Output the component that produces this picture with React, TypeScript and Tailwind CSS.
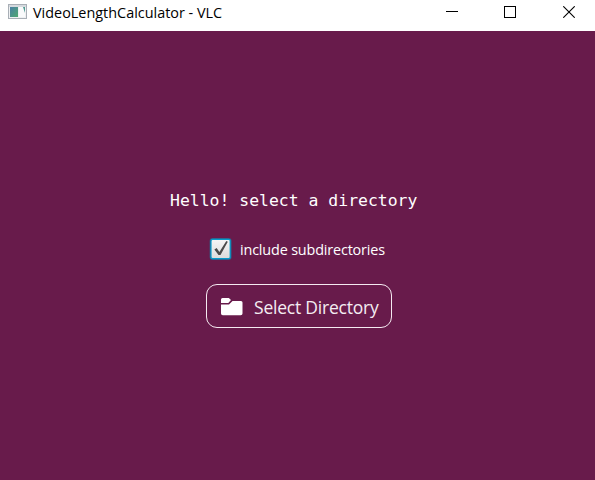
function AppIcon() {
  return (
    <svg width="19" height="15" viewBox="0 0 19 15" className="block shrink-0">
      <defs>
        <linearGradient id="pane" x1="0" y1="0" x2="1" y2="1">
          <stop offset="0" stopColor="#4a7fa5" />
          <stop offset="1" stopColor="#4fa870" />
        </linearGradient>
      </defs>
      <rect x="0.5" y="0.5" width="18" height="14" fill="#eef0f2" stroke="#a9afb6" />
      <rect x="1" y="1" width="17" height="2" fill="#d5d9de" />
      <rect x="2" y="3" width="8" height="10" fill="url(#pane)" />
      <rect x="11" y="3" width="6" height="10" fill="#f9fafb" />
      <path d="M15 3h2v6z" fill="#4f9a91" />
    </svg>
  );
}

function TitleBar() {
  return (
    <header className="flex h-[31px] shrink-0 items-start bg-white pl-2">
      <div className="mt-1">
        <AppIcon />
      </div>
      <h1 className="ml-[6px] mt-px h-6 whitespace-nowrap text-[14.4px] leading-6 tracking-[0.01px] text-black">
        VideoLengthCalculator - VLC
      </h1>
      <div className="ml-auto flex pr-5 pt-[6px]">
        <button aria-label="Minimize" className="block">
          <svg width="12" height="12" viewBox="0 0 12 12" className="block" shapeRendering="crispEdges">
            <path d="M0 5.5h12" stroke="#000" />
          </svg>
        </button>
        <button aria-label="Maximize" className="ml-[46px] block">
          <svg width="12" height="12" viewBox="0 0 12 12" className="block" shapeRendering="crispEdges">
            <rect x="0.5" y="0.5" width="11" height="11" fill="none" stroke="#000" />
          </svg>
        </button>
        <button aria-label="Close" className="ml-[47px] block">
          <svg width="12" height="12" viewBox="0 0 12 12" className="block">
            <path d="M0.3 0.3l11.4 11.4M11.7 0.3L0.3 11.7" stroke="#000" strokeWidth="1.1" />
          </svg>
        </button>
      </div>
    </header>
  );
}

function CheckBox() {
  return (
    <svg width="24" height="24" viewBox="0 0 24 24" className="block shrink-0">
      <defs>
        <linearGradient id="box" x1="0" y1="0" x2="0" y2="1">
          <stop offset="0" stopColor="#f5f5f5" />
          <stop offset="1" stopColor="#dcdcdc" />
        </linearGradient>
      </defs>
      <rect x="0.6" y="1" width="22" height="22" rx="3" fill="#1386ad" fillOpacity="0.55" />
      <rect x="1.4" y="1.8" width="20.4" height="20.4" rx="2" fill="#079bca" />
      <rect x="2.6" y="3" width="18" height="18" rx="1" fill="url(#box)" />
      <path d="M5.4 12.4l2.2-1.3 2.8 3.8L17.3 4l1.5.7-7.3 13.3h-2z" fill="#4a4a4a" />
    </svg>
  );
}

function FolderIcon() {
  return (
    <svg width="22" height="18" viewBox="0 0 22 18" className="mt-0.5 block shrink-0" fill="#fff">
      <path d="M1.5 0h6.3l2.2 2-2.7 3H0V1.5Q0 0 1.5 0z" />
      <path d="M0 6.500h8L11.500 3H20q1.500 0 1.500 1.500v11q0 1.800-1.800 1.800H1.800Q0 17.300 0 15.500z" />
    </svg>
  );
}

export default function App() {
  return (
    <div className="flex h-[480px] w-[595px] flex-col overflow-hidden bg-[#681b4b] font-['Open_Sans','Noto_Sans',sans-serif]">
      <TitleBar />
      <main className="flex flex-1 flex-col text-white">
        <p className="ml-[170px] mt-[158px] h-6 whitespace-pre font-['DejaVu_Sans_Mono',monospace] text-[16.45px] leading-6">
          Hello! select a directory
        </p>
        <label className="ml-[209px] mt-6 flex h-6 items-center">
          <CheckBox />
          <span className="ml-[7px] mt-0.5 whitespace-nowrap text-[14.4px] leading-6 tracking-[-0.16px]">include subdirectories</span>
        </label>
        <button className="ml-[206px] mt-[23px] flex h-11 w-[186px] items-center rounded-[11px] border border-[#f5eaf1] pl-[14px]">
          <FolderIcon />
          <span className="ml-[11px] mt-px whitespace-nowrap text-[17.5px] leading-6 tracking-[-0.22px] text-[#f4edf2]">Select Directory</span>
        </button>
      </main>
    </div>
  );
}
